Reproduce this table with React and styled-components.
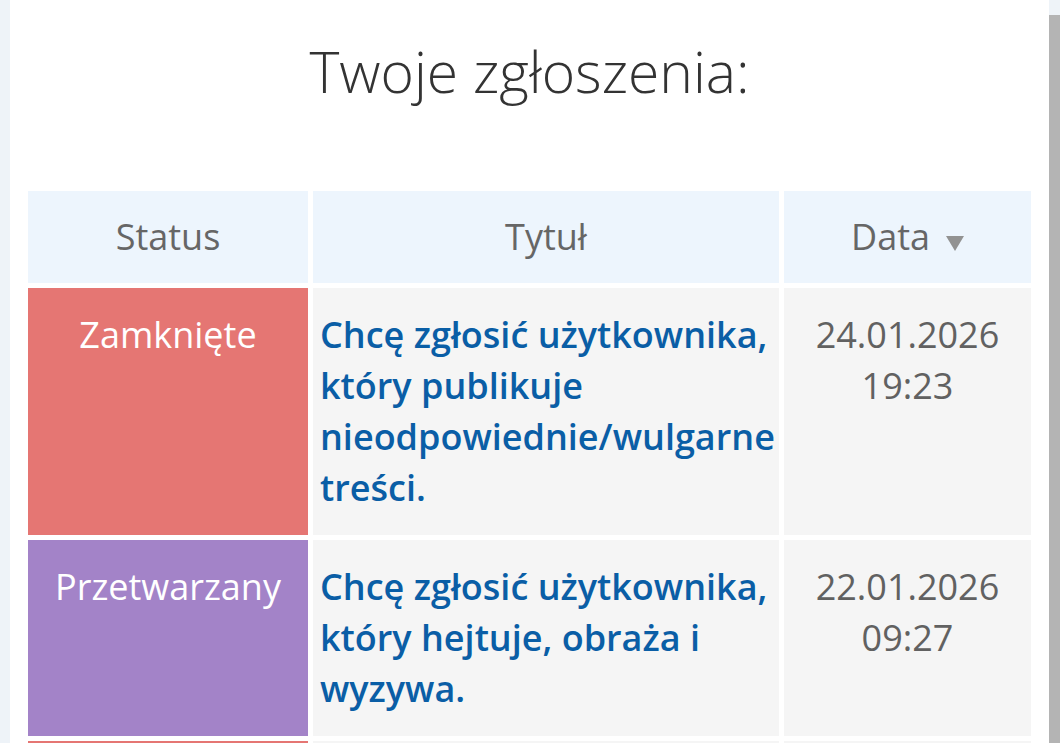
import React from "react";
import styled, { createGlobalStyle } from "styled-components";

const GlobalStyle = createGlobalStyle`
  html, body, #root {
    margin: 0;
    height: 100%;
    overflow: hidden;
  }
  body {
    background: #eef3f8;
    font-family: "Open Sans", "Noto Sans", sans-serif;
  }
`;

const Screen = styled.div`
  display: flex;
  height: 100%;
  padding-left: 10px;
`;

const Page = styled.main`
  flex: 1;
  background: #ffffff;
  padding: 0 13px;
  overflow: hidden;
`;

const ScrollTrack = styled.div`
  width: 11px;
  display: flex;
  flex-direction: column;
`;

const ScrollTop = styled.div`
  height: 15px;
  background: #eef3f8;
`;

const ScrollThumb = styled.div`
  flex: 1;
  background: #b4b4b4;
`;

const Heading = styled.h1`
  margin: 37px 0 0;
  text-align: center;
  font-size: 57px;
  line-height: 1.2;
  font-weight: 300;
  color: #333333;
`;

const Table = styled.table`
  width: 100%;
  margin-top: 81px;
  table-layout: fixed;
  border-collapse: separate;
  border-spacing: 5px 5px;
  font-size: 36px;
  line-height: 51px;
`;

const HeadCell = styled.th`
  background: #edf5fd;
  color: #666666;
  font-weight: 400;
  padding: 20px 4px 21px;
  text-align: center;
  vertical-align: middle;
`;

const SortArrow = styled.svg`
  width: 18px;
  height: 15px;
  margin-left: 16px;
  vertical-align: -1px;
`;

const StatusCell = styled.td`
  background: ${(p) => p.$color};
  color: #ffffff;
  text-align: center;
  vertical-align: top;
  padding: 21px 4px 22px;
`;

const TitleCell = styled.td`
  background: #f5f5f5;
  vertical-align: top;
  padding: 21px 1px 22px 7px;
`;

const TitleLink = styled.a`
  color: #0a5ea6;
  font-weight: 600;
  text-decoration: none;
`;

const DateCell = styled.td`
  background: #f5f5f5;
  color: #616161;
  text-align: center;
  vertical-align: top;
  padding: 21px 4px 22px;
`;

const DateLine = styled.span`
  display: block;
`;

const statusColors = {
  Zamknięte: "#e57673",
  Przetwarzany: "#a383c8",
};

const tickets = [
  {
    id: 1,
    status: "Zamknięte",
    title:
      "Chcę zgłosić użytkownika, który publikuje nieodpowiednie/wulgarne treści.",
    date: "24.01.2026",
    time: "19:23",
  },
  {
    id: 2,
    status: "Przetwarzany",
    title: "Chcę zgłosić użytkownika, który hejtuje, obraża i wyzywa.",
    date: "22.01.2026",
    time: "09:27",
  },
];

const App = () => {
  return (
    <>
      <GlobalStyle />
      <Screen>
        <Page>
          <Heading>Twoje zgłoszenia:</Heading>
          <Table>
            <colgroup>
              <col style={{ width: "280px" }} />
              <col style={{ width: "466px" }} />
              <col />
            </colgroup>
            <thead>
              <tr>
                <HeadCell>Status</HeadCell>
                <HeadCell>Tytuł</HeadCell>
                <HeadCell>
                  Data
                  <SortArrow viewBox="0 0 18 15">
                    <polygon points="0,0 18,0 9,15" fill="#929292" />
                  </SortArrow>
                </HeadCell>
              </tr>
            </thead>
            <tbody>
              {tickets.map((t) => (
                <tr key={t.id}>
                  <StatusCell $color={statusColors[t.status]}>
                    {t.status}
                  </StatusCell>
                  <TitleCell>
                    <TitleLink href="#">{t.title}</TitleLink>
                  </TitleCell>
                  <DateCell>
                    <DateLine>{t.date}</DateLine>
                    <DateLine>{t.time}</DateLine>
                  </DateCell>
                </tr>
              ))}
              {/* next row, only its top edge shows above the fold */}
              <tr>
                <StatusCell $color={statusColors["Zamknięte"]} />
                <TitleCell />
                <DateCell />
              </tr>
            </tbody>
          </Table>
        </Page>
        <ScrollTrack>
          <ScrollTop />
          <ScrollThumb />
        </ScrollTrack>
      </Screen>
    </>
  );
};

export default App;
